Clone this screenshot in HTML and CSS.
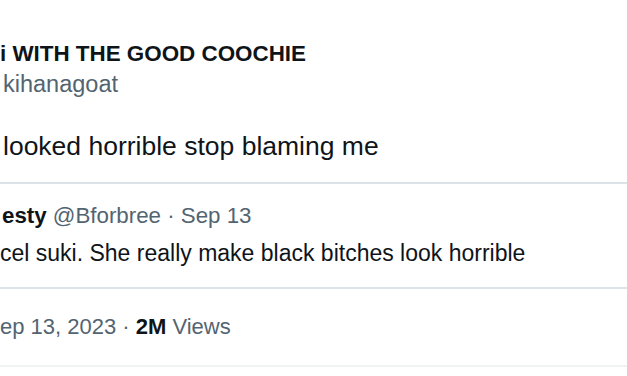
FILE: index.html
```html
<!DOCTYPE html>
<html lang="en">
<head>
	<meta charset="UTF-8">
	<title>Tweet</title>
	<link rel="stylesheet" href="styles.css">
</head>
<body>
	<div class="tweet">
		<div class="author">
			<div class="author-name">i WITH THE GOOD COOCHIE</div>
			<div class="author-handle">kihanagoat</div>
		</div>
		<div class="tweet-text">looked horrible stop blaming me</div>
		<div class="quote">
			<div class="quote-head"><span class="quote-name">esty</span> <span class="muted">@Bforbree · Sep 13</span></div>
			<div class="quote-text">cel suki. She really make black bitches look horrible</div>
		</div>
		<div class="meta"><span class="muted">ep 13, 2023 · </span><span class="meta-count">2M</span><span class="muted"> Views</span></div>
	</div>
</body>
</html>
```

FILE: styles.css
```css
body {
	margin: 0;
	background: #ffffff;
	color: #0f1419;
	font-family: "Liberation Sans", Arial, sans-serif;
}

.tweet {
	padding-top: 39px;
}

.author-name {
	font-size: 22.4px;
	font-weight: bold;
	line-height: 30px;
}

.author-handle {
	font-size: 23.5px;
	line-height: 30px;
	color: #536471;
	padding-left: 3px;
}

.tweet-text { /* main text */
	margin-top: 30px;
	padding: 0 0 19px 3px;
	font-size: 26.5px;
	line-height: 34px;
	border-bottom: 2px solid #dbe3e7;
}

.quote {
	padding: 17px 0 19px 0;
	border-bottom: 2px solid #dbe3e7;
	font-size: 23px;
}

.quote-head {
	font-size: 22.3px;
	line-height: 30px;
	padding-left: 2px;
}

.quote-name {
	font-weight: bold;
}

.quote-text {
	margin-top: 7px;
	line-height: 30px;
}

.meta {
	padding: 23px 0 23px 0;
	font-size: 22px;
	line-height: 30px;
	border-bottom: 2px solid #eff3f4;
}

.meta-count {
	font-weight: bold;
}

.muted {
	color: #536471;
}
```
